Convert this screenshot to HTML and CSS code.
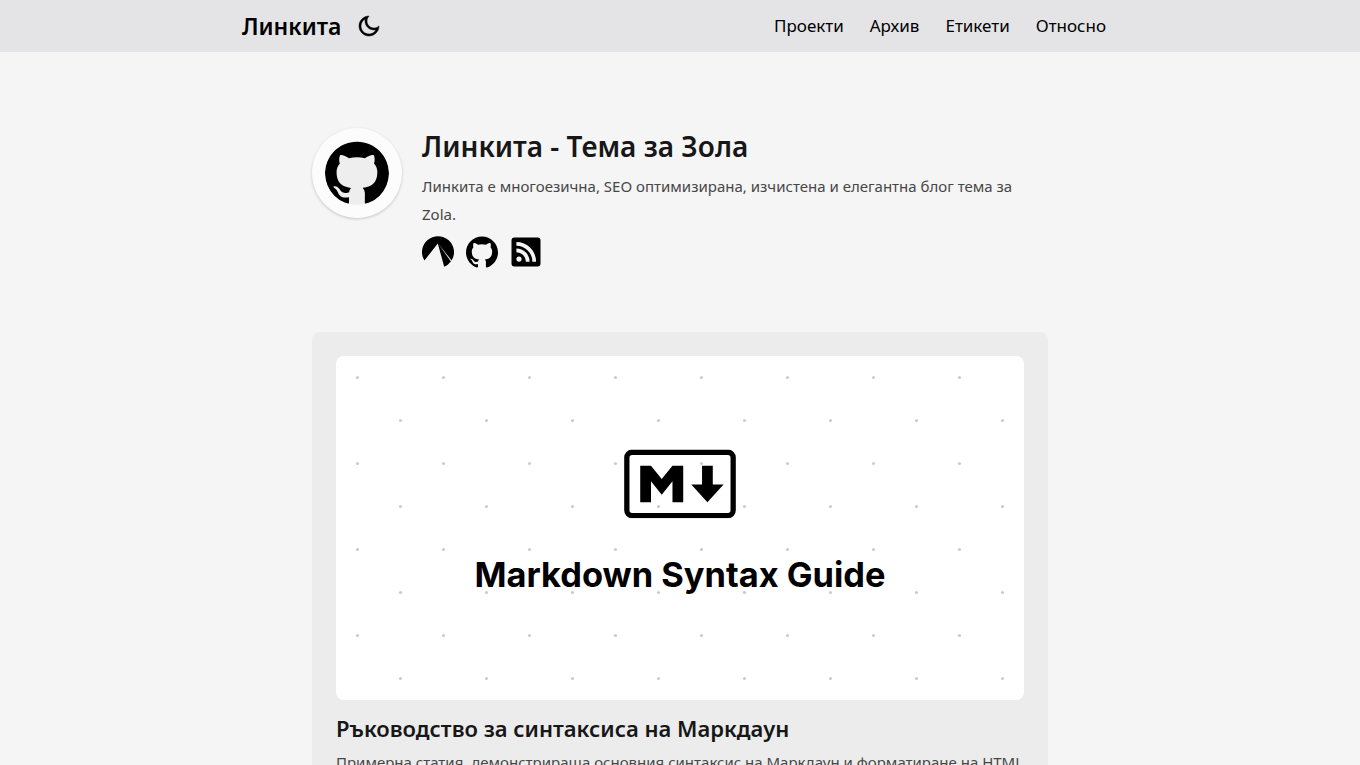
FILE: index.html
```html
<!DOCTYPE html>
<html lang="bg">
<head>
<meta charset="utf-8">
<meta name="viewport" content="width=device-width, initial-scale=1">
<title>Линкита</title>
<link rel="stylesheet" href="styles.css">
</head>
<body>
<svg class="sprite" aria-hidden="true">
  <symbol id="github" viewBox="0 0 24 24">
    <path d="M12 .297c-6.63 0-12 5.373-12 12 0 5.303 3.438 9.8 8.205 11.385.6.113.82-.258.82-.577 0-.285-.01-1.04-.015-2.04-3.338.724-4.042-1.61-4.042-1.61C4.422 18.07 3.633 17.7 3.633 17.7c-1.087-.744.084-.729.084-.729 1.205.084 1.838 1.236 1.838 1.236 1.07 1.835 2.809 1.305 3.495.998.108-.776.417-1.305.76-1.605-2.665-.3-5.466-1.332-5.466-5.93 0-1.31.465-2.38 1.235-3.22-.135-.303-.54-1.523.105-3.176 0 0 1.005-.322 3.3 1.23.96-.267 1.98-.399 3-.405 1.02.006 2.04.138 3 .405 2.28-1.552 3.285-1.23 3.285-1.23.645 1.653.24 2.873.12 3.176.765.84 1.23 1.91 1.23 3.22 0 4.61-2.805 5.625-5.475 5.92.42.36.81 1.096.81 2.22 0 1.606-.015 2.896-.015 3.286 0 .315.21.69.825.57C20.565 22.092 24 17.592 24 12.297c0-6.627-5.373-12-12-12"/>
  </symbol>
</svg>

<header class="site-header">
  <div class="header-inner">
    <div class="brand">
      <a class="brand-name" href="#">Линкита</a>
      <button class="theme-toggle" type="button" aria-label="Тъмен режим">
        <svg class="moon" viewBox="0 0 24 24"><path d="M10 7C10 10.866 13.134 14 17 14C18.958 14 20.729 13.196 22 11.899C22 11.933 22 11.966 22 12C22 17.523 17.523 22 12 22C6.477 22 2 17.523 2 12C2 6.477 6.477 2 12 2C12.034 2 12.067 2 12.101 2C10.804 3.271 10 5.042 10 7ZM4 12C4 16.418 7.582 20 12 20C15.058 20 17.716 18.284 19.062 15.762C18.395 15.919 17.706 16 17 16C12.029 16 8 11.971 8 7C8 6.294 8.081 5.605 8.238 4.938C5.716 6.284 4 8.942 4 12Z"/></svg>
      </button>
    </div>
    <nav class="menu">
      <a href="#">Проекти</a>
      <a href="#">Архив</a>
      <a href="#">Етикети</a>
      <a href="#">Относно</a>
    </nav>
  </div>
</header>

<main class="content">
  <section class="profile">
    <div class="avatar"><svg class="avatar-mark"><use href="#github"/></svg></div>
    <div class="profile-body">
      <h1 class="profile-title">Линкита - Тема за Зола</h1>
      <p class="profile-text">Линкита е многоезична, SEO оптимизирана, изчистена и елегантна блог тема за Zola.</p>
      <div class="socials">
        <a href="#" aria-label="Codeberg"><svg class="social-icon" viewBox="0 0 32 32"><path d="M2.4 24.6A16 16 0 1 1 29.6 24.6L16.2 7.4L28.9 25.6A16 16 0 0 1 22.2 30.8L15.8 7.4Z"/></svg></a>
        <a href="#" aria-label="GitHub"><svg class="social-icon"><use href="#github"/></svg></a>
        <a href="#" aria-label="RSS"><svg class="social-icon" viewBox="0 0 32 32"><path fill-rule="evenodd" d="M4.500 1.500h23a3 3 0 0 1 3 3v23a3 3 0 0 1-3 3h-23a3 3 0 0 1-3-3v-23a3 3 0 0 1 3-3ZM9 20.500a2.600 2.600 0 1 0 0 5.200a2.600 2.600 0 1 0 0-5.200ZM6.400 12.500v3.700a9.500 9.500 0 0 1 9.500 9.500h3.700A13.200 13.200 0 0 0 6.400 12.500ZM6.400 6v3.700a16 16 0 0 1 16 16h3.700A19.700 19.700 0 0 0 6.400 6Z"/></svg></a>
      </div>
    </div>
  </section>

  <article class="card">
    <svg class="cover" viewBox="0 0 1280 640" role="img" aria-label="Markdown Syntax Guide">
      <defs>
        <pattern id="dots" width="160" height="160" patternUnits="userSpaceOnUse">
          <circle cx="40" cy="40" r="3"/>
          <circle cx="120" cy="120" r="3"/>
        </pattern>
      </defs>
      <rect width="1280" height="640" fill="#fff"/>
      <rect class="cover-dots" width="1280" height="640" fill="url(#dots)"/>
      <svg x="536" y="174" width="208" height="128" viewBox="0 0 208 128">
        <rect x="5" y="5" width="198" height="118" rx="10" fill="none" stroke="#000" stroke-width="10"/>
        <path d="M30 98V30h20l20 25 20-25h20v68H90V59L70 84 50 59v39zm125 0l-30-33h20V30h20v35h20z"/>
      </svg>
      <text class="cover-title" x="640" y="430" text-anchor="middle">Markdown Syntax Guide</text>
    </svg>
    <h2 class="card-title"><a href="#">Ръководство за синтаксиса на Маркдаун</a></h2>
    <p class="card-text">Примерна статия, демонстрираща основния синтаксис на Маркдаун и форматиране на HTML елементи.</p>
  </article>
</main>
</body>
</html>
```

FILE: styles.css
```css
* { box-sizing: border-box; }

body {
  margin: 0;
  background: #f5f5f5;
  color: #171717;
  font: 15px/28px "Noto Sans", sans-serif;
}

h1, h2, p { margin: 0; }
a { color: inherit; text-decoration: none; }
svg { display: block; }
.sprite { position: absolute; width: 0; height: 0; }

.site-header { background: #e4e4e7; color: #000; }

.header-inner {
  display: flex;
  align-items: center;
  justify-content: space-between;
  max-width: 896px;
  min-height: 52px;
  margin: 0 auto;
  padding: 0 22px 0 10px;
}

.brand { display: flex; align-items: center; gap: 16px; }
.brand-name { font-size: 23px; font-weight: 600; line-height: 32px; }
.theme-toggle { padding: 0; border: 0; background: none; cursor: pointer; }
.moon { width: 24px; height: 24px; stroke: #000; stroke-width: 0.5; }

.menu { display: flex; gap: 26px; font-size: 17px; }

.content { max-width: 736px; margin: 0 auto; }

.profile { display: flex; gap: 20px; padding: 76px 0 64px; }

.avatar {
  display: grid;
  place-items: center;
  flex: none;
  width: 90px;
  height: 90px;
  border-radius: 50%;
  background: #fcfcfc;
  box-shadow: 0 1px 3px rgb(0 0 0 / 20%);
}

.avatar-mark {
  width: 64px;
  height: 64px;
  border-radius: 50%;
  background: #eee;
}

.profile-title { font-size: 28px; font-weight: 600; line-height: 36px; }
.profile-text { margin-top: 8px; color: #474747; }

.socials { display: flex; gap: 12px; margin-top: 8px; }
.social-icon { width: 32px; height: 32px; }

.card {
  padding: 24px;
  border-radius: 8px;
  background: #ececec;
}

.cover { width: 100%; height: auto; border-radius: 8px; }
.cover-dots { opacity: 0.2; }
.cover-title { font: 700 64px Inter, sans-serif; }

.card-title { margin-top: 12px; font-size: 22px; font-weight: 600; line-height: 32px; }
.card-text { margin-top: 4px; color: #474747; }
```
